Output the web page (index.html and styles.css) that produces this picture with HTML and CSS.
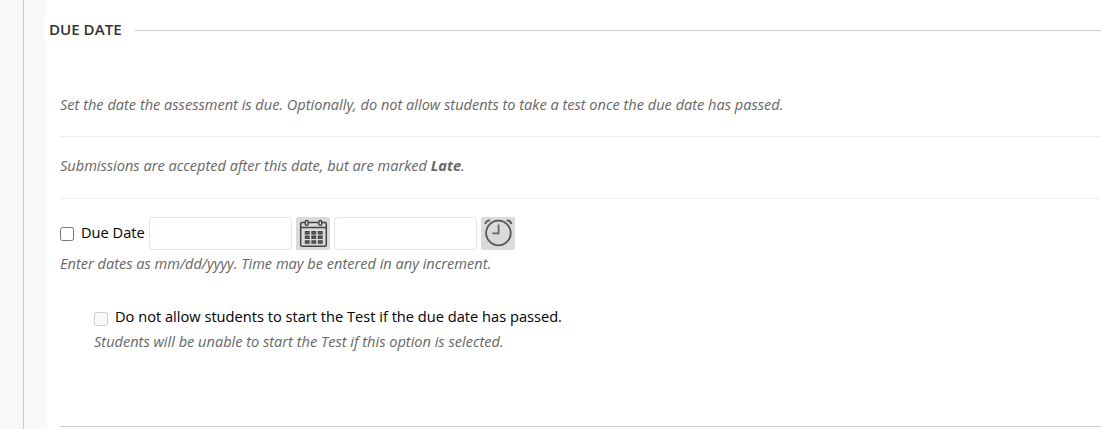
FILE: index.html
```html
<!DOCTYPE html>
<html lang="en">
<head>
    <meta charset="UTF-8">
    <meta name="viewport" content="width=device-width, initial-scale=1.0">
    <title>Due Date</title>
    <link rel="stylesheet" href="styles.css">
</head>
<body>
    <div class="sidebar"></div>
    <form class="panel">
        <div class="section-header">
            <h2 class="section-title">DUE DATE</h2>
            <span class="section-line"></span>
        </div>
        <div class="section-body">
            <p class="help intro">Set the date the assessment is due. Optionally, do not allow students to take a test once the due date has passed.</p>
            <p class="help late-note">Submissions are accepted after this date, but are marked <strong>Late</strong>.</p>
            <div class="due-date">
                <div class="date-row">
                    <input type="checkbox" id="due" class="checkbox">
                    <label for="due">Due Date</label>
                    <input type="text" class="date-input" aria-label="Date">
                    <button type="button" class="picker" aria-label="Choose date">
                        <svg width="34" height="33" viewBox="0 0 34 33" fill="none" stroke="#444">
                            <path d="M9 5.500H6Q4.700 5.500 4.700 7V28Q4.700 29.300 6 29.300H29Q30.300 29.300 30.300 28V7Q30.300 5.500 29 5.500H26M12.500 5.500H22.500M4.700 10.500H30.300" stroke-width="1.500"/>
                            <rect x="9.300" y="3.500" width="2.800" height="4.800" rx="1.200" stroke-width="1.400"/>
                            <rect x="22.900" y="3.500" width="2.800" height="4.800" rx="1.200" stroke-width="1.400"/>
                            <path d="M9.500 14.700h3.500v2h-3.500zM16 14.700h3.500v2h-3.500zM22.500 14.700h3.500v2h-3.500zM9.500 19.300h3.500v2h-3.500zM16 19.300h3.500v2h-3.500zM22.500 19.300h3.500v2h-3.500zM9.500 24h3.500v2h-3.500zM16 24h3.500v2h-3.500zM22.500 24h3.500v2h-3.500z" fill="#999" stroke-width="1.400"/>
                        </svg>
                    </button>
                    <input type="text" class="date-input" aria-label="Time">
                    <button type="button" class="picker" aria-label="Choose time">
                        <svg width="34" height="33" viewBox="0 0 34 33" fill="none" stroke="#555">
                            <circle cx="17.400" cy="16" r="12.300" stroke-width="1.800"/>
                            <path d="M17.600 7.500V16.300H11.300" stroke="#666" stroke-width="1.800"/>
                            <path d="M4.300 7Q5 3.500 9 3.300M25.700 3.300Q29.700 3.500 30.400 7" stroke-width="1.800"/>
                        </svg>
                    </button>
                </div>
                <p class="help">Enter dates as mm/dd/yyyy. Time may be entered in any increment.</p>
            </div>
            <div class="restriction">
                <div class="restriction-row">
                    <input type="checkbox" id="block" class="checkbox" disabled>
                    <label for="block">Do not allow students to start the Test if the due date has passed.</label>
                </div>
                <p class="help">Students will be unable to start the Test if this option is selected.</p>
            </div>
        </div>
    </form>
</body>
</html>
```

FILE: styles.css
```css
* {
    margin: 0;
    padding: 0;
    box-sizing: border-box;
}

body {
    display: flex;
    height: 429px;
    overflow: hidden;
    background: #f8f8f8;
    color: #000;
    font-family: "Open Sans", sans-serif;
    font-size: 14.63px;
    line-height: 18px;
    white-space: nowrap;
}

.sidebar {
    width: 24px;
    border-right: 1px solid #ccc;
}

.panel {
    flex: 1;
    margin-left: 23px;
    background: #fff;
}

.section-header {
    display: flex;
    align-items: center;
    margin: 15px 0 0 -3px;
    height: 24px;
}

.section-title {
    width: 91px;
    padding: 4px 0 0 5px;
    height: 24px;
    background: #fff;
    color: #333;
    font-size: 15.1px;
    font-weight: 600;
    line-height: 20px;
}

.section-line {
    flex: 1;
    height: 1px;
    margin-top: 7px;
    background: #ccc;
}

.section-body {
    height: 388px;
    margin-left: 13px;
    padding-top: 36px;
    border-bottom: 1px solid #ccc;
}

.help {
    color: #666;
    font-size: 14.57px;
    font-style: italic;
}

.intro {
    height: 62px;
    padding-top: 20px;
    border-bottom: 1px solid #eee;
}

.late-note {
    height: 62px;
    padding-top: 19px;
    border-bottom: 1px solid #eee;
}

.due-date {
    padding-top: 18px;
}

.date-row {
    display: flex;
    align-items: center;
    height: 33px;
    margin-bottom: 4px;
}

.checkbox {
    width: 14px;
    height: 14px;
    margin: 1px 7px 0 0;
}

.date-row label {
    width: 68px;
    margin-top: -4px;
}

.date-input {
    width: 143px;
    height: 33px;
    border: 1px solid #e4e4e4;
    border-radius: 4px;
    background: #fff;
}

.picker {
    width: 34px;
    height: 33px;
    margin: 0 4px;
    border: none;
    border-radius: 2px;
    background: #dadada;
}

.picker svg {
    display: block;
}

.restriction {
    margin: 35px 0 0 34px;
}

.restriction-row {
    display: flex;
    align-items: center;
    height: 20px;
    margin-bottom: 5px;
}

.restriction-row .checkbox {
    margin-top: 4px;
}

.restriction-row label {
    margin-top: -2px;
}
```
